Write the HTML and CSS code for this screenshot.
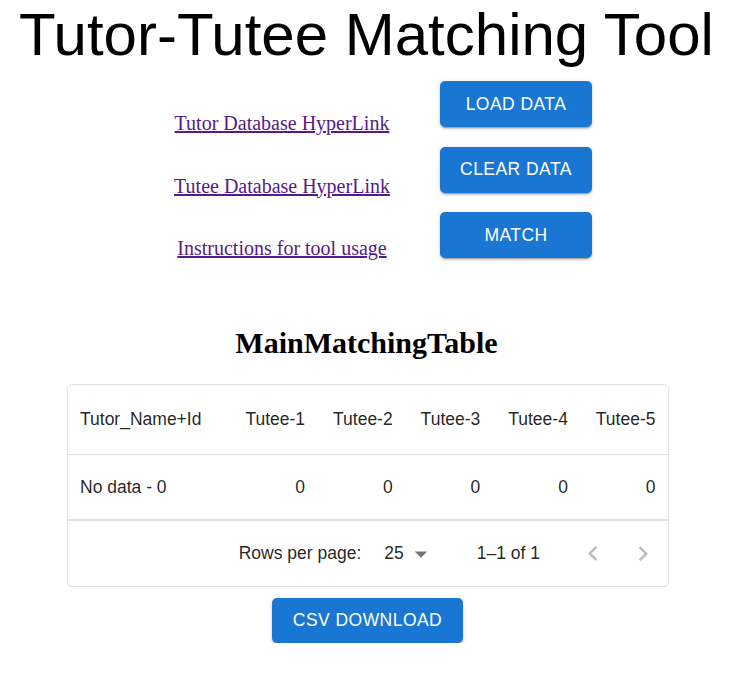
FILE: index.html
```html
<!DOCTYPE html>
<html lang="en">
<head>
<meta charset="utf-8">
<title>Tutor-Tutee Matching Tool</title>
<link rel="stylesheet" href="styles.css">
</head>
<body>
<h1 class="title">Tutor-Tutee Matching Tool</h1>
<div class="controls">
  <div class="links">
    <a class="link" href="#tutor">Tutor Database HyperLink</a>
    <a class="link" href="#tutee">Tutee Database HyperLink</a>
    <a class="link" href="#instr">Instructions for tool usage</a>
  </div>
  <div class="actions">
    <button class="btn">Load Data</button>
    <button class="btn">Clear Data</button>
    <button class="btn">Match</button>
  </div>
</div>
<h2 class="table-title">MainMatchingTable</h2>
<div class="paper">
  <table class="grid">
    <colgroup>
      <col class="col-name">
      <col class="col-num"><col class="col-num"><col class="col-num"><col class="col-num"><col class="col-num">
    </colgroup>
    <thead>
      <tr>
        <th class="cell-left">Tutor_Name+Id</th>
        <th>Tutee-1</th><th>Tutee-2</th><th>Tutee-3</th><th>Tutee-4</th><th>Tutee-5</th>
      </tr>
    </thead>
    <tbody>
      <tr>
        <td class="cell-left">No data - 0</td>
        <td>0</td><td>0</td><td>0</td><td>0</td><td>0</td>
      </tr>
    </tbody>
  </table>
  <div class="pagination">
    <span class="pg-label">Rows per page:</span>
    <span class="pg-select"><span class="pg-value">25</span><svg class="pg-arrow" viewBox="0 0 24 24" width="30" height="30"><path d="M7 10l5 5 5-5z"/></svg></span>
    <span class="pg-range">1–1 of 1</span>
    <span class="pg-actions">
      <span class="pg-btn"><svg viewBox="0 0 24 24" width="30" height="30"><path d="M15.41 16.09l-4.58-4.59 4.58-4.59L14 5.5l-6 6 6 6z"/></svg></span>
      <span class="pg-btn"><svg viewBox="0 0 24 24" width="30" height="30"><path d="M8.59 16.34l4.58-4.59-4.58-4.59L10 5.75l6 6-6 6z"/></svg></span>
    </span>
  </div>
</div>
<div class="download">
  <button class="btn btn-wide">CSV Download</button>
</div>
</body>
</html>
```

FILE: styles.css
```css
html, body {
  margin: 0;
  padding: 0;
  background: #ffffff;
}

body {
  font-family: "Liberation Serif", "Times New Roman", serif;
  color: #000;
}

.title {
  margin: 2px 0 0 0;
  font-family: "Liberation Sans", Arial, sans-serif;
  font-weight: 400;
  font-size: 60px;
  line-height: 66px;
  text-align: center;
}

.controls {
  display: flex;
  align-items: flex-start;
  gap: 38px;
  margin-top: 13px;
  padding-left: 162px;
}

.links {
  display: flex;
  flex-direction: column;
  align-items: center;
  width: 240px;
  gap: 39.5px;
  padding-top: 31px;
  font-size: 20px;
  line-height: 23px;
  white-space: nowrap;
}

.link {
  color: #551a8b;
  text-decoration: underline;
}

.actions {
  display: flex;
  flex-direction: column;
  width: 152px;
  gap: 19.5px;
}

.btn {
  display: inline-flex;
  align-items: center;
  justify-content: center;
  height: 46px;
  padding: 0 20px;
  border: 0;
  border-radius: 5px;
  background: #1976d2;
  color: #fff;
  font-family: "Liberation Sans", Arial, sans-serif;
  font-size: 17.5px;
  font-weight: 400;
  letter-spacing: 0.45px;
  text-transform: uppercase;
  box-shadow: 0 3px 1px -2px rgba(0,0,0,0.2), 0 2px 2px 0 rgba(0,0,0,0.14), 0 1px 5px 0 rgba(0,0,0,0.12);
  cursor: pointer;
}

.table-title {
  margin: 65px 0 0 0;
  font-size: 30px;
  line-height: 35px;
  font-weight: 700;
  text-align: center;
}

.paper {
  width: 600px;
  margin: 24px 0 0 67px;
  border: 1px solid #e0e0e0;
  border-radius: 5px;
  overflow: hidden;
  font-family: "Liberation Sans", Arial, sans-serif;
  font-size: 17.5px;
  color: rgba(0,0,0,0.87);
}

.grid {
  width: 100%;
  border-collapse: collapse;
  table-layout: fixed;
}

.col-name { width: 162px; }
.col-num { width: 87.6px; }

.grid th,
.grid td {
  padding: 0 12.5px 0 12px;
  text-align: right;
  font-weight: 400;
  border-bottom: 1px solid #e0e0e0;
  white-space: nowrap;
}

.grid th { height: 69px; }
.grid td { height: 64px; }

.grid .cell-left { text-align: left; }

.pagination {
  display: flex;
  align-items: center;
  justify-content: flex-end;
  height: 65px;
  padding-right: 10px;
  border-top: 1px solid #e0e0e0;
}

.pg-select {
  display: flex;
  align-items: center;
  margin-left: 23px;
}

.pg-arrow {
  fill: rgba(0,0,0,0.54);
  margin-left: 2px;
}

.pg-range { margin-left: 41px; }

.pg-actions {
  display: flex;
  gap: 20px;
  margin-left: 38px;
}

.pg-btn {
  display: flex;
  width: 30px;
  height: 30px;
  fill: rgba(0,0,0,0.26);
}

.download {
  display: flex;
  justify-content: center;
  margin-top: 11px;
  padding-left: 2px;
}

.btn-wide {
  height: 45px;
  padding: 0 20.5px;
}
```
